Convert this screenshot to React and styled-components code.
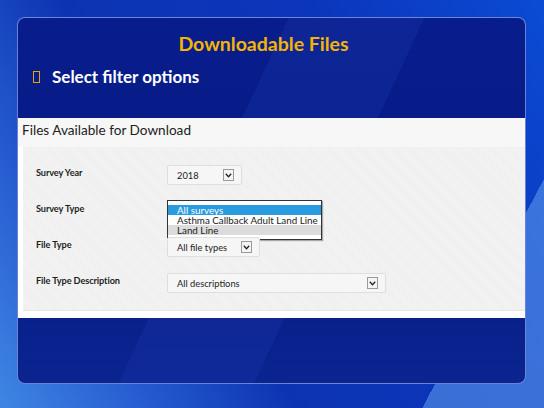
import React from 'react';
import styled, { createGlobalStyle } from 'styled-components';

const GlobalStyle = createGlobalStyle`
  html, body {
    margin: 0;
    padding: 0;
  }
  body {
    font-family: Lato, "Open Sans", sans-serif;
  }
`;

const rows = [
  { label: 'Survey Year', value: '2018', width: 75 },
  { label: 'Survey Type', value: 'All surveys', width: 155, open: true },
  { label: 'File Type', value: 'All file types', width: 93 },
  { label: 'File Type Description', value: 'All descriptions', width: 219 },
];

const options = ['All surveys', 'Asthma Callback Adult Land Line', 'Land Line'];

const Chevron = () => (
  <svg width="7" height="5" viewBox="0 0 7 5">
    <path d="M0.8 0.8 L3.5 3.8 L6.2 0.8" fill="none" stroke="#222" strokeWidth="1.3" />
  </svg>
);

const App = () => {
  return (
    <>
      <GlobalStyle />
      <Page>
        <Panel>
          <Title>Downloadable Files</Title>
          <Bullet>
            <BulletMark />
            <span>Select filter options</span>
          </Bullet>
          <Sheet>
            <SheetHead>Files Available for Download</SheetHead>
            <Form>
              {rows.map((row) => (
                <Row key={row.label}>
                  <Label>{row.label}</Label>
                  <SelectCell>
                    <Select $width={row.width}>
                      <span>{row.value}</span>
                      <ArrowBox>
                        <Chevron />
                      </ArrowBox>
                    </Select>
                    {row.open && (
                      <ListBox>
                        {options.map((opt, i) => (
                          <Option key={opt} $selected={i === 0} $hover={i === 2}>
                            {opt}
                          </Option>
                        ))}
                      </ListBox>
                    )}
                  </SelectCell>
                </Row>
              ))}
            </Form>
          </Sheet>
        </Panel>
      </Page>
    </>
  );
};

const Page = styled.div`
  width: 544px;
  height: 408px;
  box-sizing: border-box;
  padding: 17px 17px 0 17px;
  overflow: hidden;
  background:
    linear-gradient(118deg, transparent 0 84%, rgba(90, 150, 235, 0.6) 84% 100%),
    linear-gradient(60deg, #3f86e2 0%, #2a62d4 16%, #0c34b2 38%, #0b36bc 70%, #0b4bd4 100%);
`;

const Panel = styled.div`
  width: 509px;
  height: 367px;
  box-sizing: border-box;
  border: 1px solid rgba(140, 165, 240, 0.75);
  border-radius: 8px;
  overflow: hidden;
  display: flex;
  flex-direction: column;
  background:
    linear-gradient(115deg, transparent 0 40%, rgba(30, 60, 180, 0.25) 40% 60%, transparent 60%),
    linear-gradient(180deg, #081d8c 0%, #071a84 60%, #0a2590 100%);
`;

const Title = styled.h1`
  margin: 14px 16px 0 0;
  text-align: center;
  font-family: Lato, "Open Sans", sans-serif;
  font-weight: 700;
  font-size: 19.5px;
  line-height: 24px;
  color: #f4b400;
`;

const Bullet = styled.div`
  display: flex;
  align-items: center;
  gap: 12px;
  margin: 11px 0 0 15px;
  font-family: Lato, "Open Sans", sans-serif;
  font-weight: 700;
  font-size: 17px;
  line-height: 20px;
  color: #ffffff;
`;

const BulletMark = styled.span`
  width: 5px;
  height: 10px;
  border: 1px solid #e8a400;
`;

const Sheet = styled.div`
  margin-top: 31px;
  background: #ffffff;
  padding-bottom: 7px;
`;

const SheetHead = styled.div`
  height: 29px;
  box-sizing: border-box;
  padding: 4px 0 0 4px;
  background: #f7f7f7;
  font-family: Lato, "Open Sans", sans-serif;
  font-size: 13.6px;
  color: #222;
`;

const Form = styled.div`
  margin-left: 5px;
  padding: 18px 0 17px 13px;
  display: flex;
  flex-direction: column;
  gap: 16px;
  background: repeating-linear-gradient(45deg, #efefef 0 1px, #f3f3f3 1px 2px);
  border-bottom: 1px solid #e6e6e6;
`;

const Row = styled.div`
  display: grid;
  grid-template-columns: 131px auto;
  align-items: start;
  height: 20px;
`;

const Label = styled.div`
  padding-top: 2px;
  font-family: Lato, "Open Sans", sans-serif;
  font-weight: 700;
  font-size: 9.2px;
  color: #1e1e1e;
  letter-spacing: -0.1px;
`;

const SelectCell = styled.div`
  position: relative;
`;

const Select = styled.div`
  width: ${(p) => p.$width}px;
  height: 20px;
  box-sizing: border-box;
  display: flex;
  align-items: center;
  justify-content: space-between;
  padding: 0 7px 0 9px;
  background: #f6f6f6;
  border: 1px solid #dedede;
  border-radius: 2px;
  font-family: Lato, "Open Sans", sans-serif;
  font-size: 9.3px;
  color: #222;
`;

const ArrowBox = styled.span`
  width: 11px;
  height: 12px;
  box-sizing: border-box;
  display: flex;
  align-items: center;
  justify-content: center;
  border: 1px solid #9a9a9a;
  background: #f4f4f4;
`;

const ListBox = styled.div`
  position: absolute;
  top: -1px;
  left: 0;
  width: 155px;
  height: 40px;
  box-sizing: border-box;
  padding-top: 4px;
  background: #ffffff;
  border: 1px solid #333;
  box-shadow: 1px 1px 1px rgba(0, 0, 0, 0.3);
`;

const Option = styled.div`
  height: 10px;
  line-height: 10px;
  overflow: hidden;
  padding-left: 9px;
  font-family: Lato, "Open Sans", sans-serif;
  font-size: 9.8px;
  white-space: nowrap;
  color: ${(p) => (p.$selected ? '#ffffff' : '#222')};
  background: ${(p) => (p.$selected ? '#2b9be0' : p.$hover ? '#dcdcdc' : 'transparent')};
`;

export default App;
